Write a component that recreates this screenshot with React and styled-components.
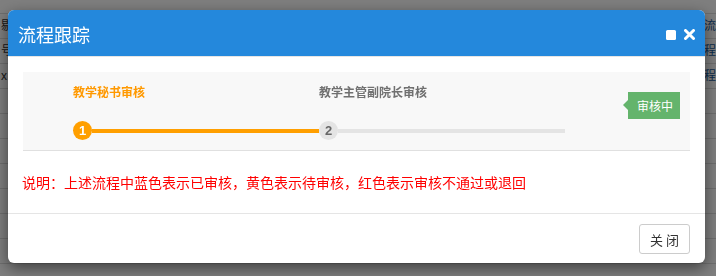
import React from 'react';
import styled, { createGlobalStyle } from 'styled-components';

const GlobalStyle = createGlobalStyle`
  html, body {
    margin: 0;
    padding: 0;
    width: 716px;
    height: 276px;
    overflow: hidden;
    background: #fff;
    font-family: 'Liberation Sans', 'Noto Sans CJK SC', sans-serif;
  }
`;

// the table that sits behind the modal backdrop
const BackTable = styled.div`
  width: 716px;
  border-top: 1px solid #ddd;
  margin-top: 13px;
`;

const BackRow = styled.div`
  display: grid;
  grid-template-columns: 63px 44px 88px 87px 73px 58px 74px 1fr 16px;
  height: 25px;
  border-bottom: 1px solid #ddd;
  box-sizing: border-box;
`;

const BackCell = styled.div`
  border-right: ${(p) => (p.last ? 'none' : '1px solid #ddd')};
  font-size: 12px;
  line-height: 24px;
  color: ${(p) => (p.link ? '#1a5a9a' : '#333')};
  white-space: nowrap;
  padding-left: ${(p) => (p.last ? 4 : 1)}px;
`;

const Backdrop = styled.div`
  position: fixed;
  inset: 0;
  background: rgba(0, 0, 0, 0.5);
`;

const Modal = styled.div`
  position: absolute;
  left: 8px;
  top: 10px;
  width: 697px;
  background: #fff;
  border-radius: 6px;
  overflow: hidden;
  box-shadow: 0 5px 15px rgba(0, 0, 0, 0.5);
`;

const Header = styled.div`
  height: 46px;
  background: #2488dc;
  border-bottom: 1px solid #e5e5e5;
  display: flex;
  align-items: center;
  justify-content: space-between;
  padding: 0 10px 0 10px;
  h4 {
    margin: 0;
    color: #fff;
    font-size: 18px;
    font-weight: normal;
    font-family: 'Noto Sans CJK SC', sans-serif;
    padding-top: 2px;
  }
`;

const Tools = styled.div`
  display: flex;
  align-items: center;
  gap: 8px;
  padding-top: 3px;
`;

const MaxIcon = styled.span`
  display: block;
  width: 10px;
  height: 10px;
  background: #fff;
  border-radius: 1.5px;
`;

const Body = styled.div`
  padding: 15px 15px 0;
  height: 141px;
`;

const StepsPanel = styled.div`
  background: #f8f8f8;
  border-bottom: 1px solid #e0e0e0;
  height: 78px;
  display: flex;
  padding-left: 50px;
  padding-right: 10px;
`;

const Step = styled.div`
  width: 246px;
  display: flex;
  flex-direction: column;
`;

const StepLabel = styled.div`
  margin-top: 11px;
  height: 18px;
  line-height: 18px;
  font-size: 12px;
  font-weight: bold;
  font-family: 'Noto Sans CJK SC', sans-serif;
  color: ${(p) => (p.active ? '#ff9900' : '#707070')};
`;

const Track = styled.div`
  margin-top: 20px;
  display: flex;
  align-items: center;
`;

const Dot = styled.div`
  width: 19px;
  height: 19px;
  border-radius: 50%;
  flex: none;
  background: ${(p) => (p.active ? '#ff9f00' : '#e4e4e4')};
  color: ${(p) => (p.active ? '#fff' : '#666')};
  font-size: 13px;
  font-weight: bold;
  line-height: 19px;
  text-align: center;
  font-family: 'Liberation Sans', sans-serif;
`;

const Line = styled.div`
  flex: 1;
  height: 4px;
  background: ${(p) => (p.active ? '#ff9f00' : '#e4e4e4')};
`;

const Badge = styled.div`
  position: relative;
  margin-left: auto;
  margin-top: 20px;
  height: 27px;
  line-height: 27px;
  padding: 0 7px 0 9px;
  background: #64b46c;
  color: #fff;
  font-size: 12px;
  font-family: 'Noto Sans CJK SC', sans-serif;
  &:before {
    content: '';
    position: absolute;
    left: -5px;
    top: 8px;
    border-style: solid;
    border-width: 5px 5px 5px 0;
    border-color: transparent #64b46c transparent transparent;
  }
`;

const Note = styled.p`
  margin: 21px 0 0 -1px;
  font-size: 14px;
  line-height: 20px;
  color: #ff0000;
  font-family: 'Noto Sans CJK SC', sans-serif;
`;

const Footer = styled.div`
  border-top: 1px solid #e5e5e5;
  padding: 10px 15px 9px;
  display: flex;
  justify-content: flex-end;
`;

const Button = styled.button`
  width: 51px;
  height: 30px;
  border: 1px solid #ccc;
  border-radius: 3px;
  background: #fff;
  color: #333;
  font-size: 13px;
  font-family: 'Noto Sans CJK SC', sans-serif;
  padding: 0;
`;

const rows = [
  ['剔', '', '', '', '', '', '', '', '流'],
  ['号', '', '', '', '', '', '', '', '程'],
  ['x', '', '', '', '', '', '', '', '程'],
  ['', '', '', '', '', '', '', '', ''],
  ['', '', '', '', '', '', '', '', ''],
  ['', '', '', '', '', '', '', '', ''],
  ['', '', '', '', '', '', '', '', ''],
  ['', '', '', '', '', '', '', '', ''],
  ['', '', '', '', '', '', '', '', ''],
  ['', '', '', '', '', '', '', '', ''],
];

const steps = [
  { name: '教学秘书审核', active: true },
  { name: '教学主管副院长审核', active: false },
];

const App = () => {
  return (
    <>
      <GlobalStyle />
      <BackTable>
        {rows.map((r, i) => (
          <BackRow key={i}>
            {r.map((c, j) => (
              <BackCell key={j} link={j === 8} last={j === 8}>
                {c}
              </BackCell>
            ))}
          </BackRow>
        ))}
      </BackTable>
      <Backdrop />
      <Modal>
        <Header>
          <h4>流程跟踪</h4>
          <Tools>
            <MaxIcon />
            <svg width="11" height="11" viewBox="0 0 11 11">
              <path d="M1.5 1.5 L9.5 9.5 M9.5 1.5 L1.5 9.5" stroke="#fff" strokeWidth="3" strokeLinecap="round" />
            </svg>
          </Tools>
        </Header>
        <Body>
          <StepsPanel>
            {steps.map((s, i) => (
              <Step key={i}>
                <StepLabel active={s.active}>{s.name}</StepLabel>
                <Track>
                  <Dot active={s.active}>{i + 1}</Dot>
                  <Line active={s.active} />
                </Track>
              </Step>
            ))}
            <Badge>审核中</Badge>
          </StepsPanel>
          <Note>说明：上述流程中蓝色表示已审核，黄色表示待审核，红色表示审核不通过或退回</Note>
        </Body>
        <Footer>
          <Button>关 闭</Button>
        </Footer>
      </Modal>
    </>
  );
};

export default App;
